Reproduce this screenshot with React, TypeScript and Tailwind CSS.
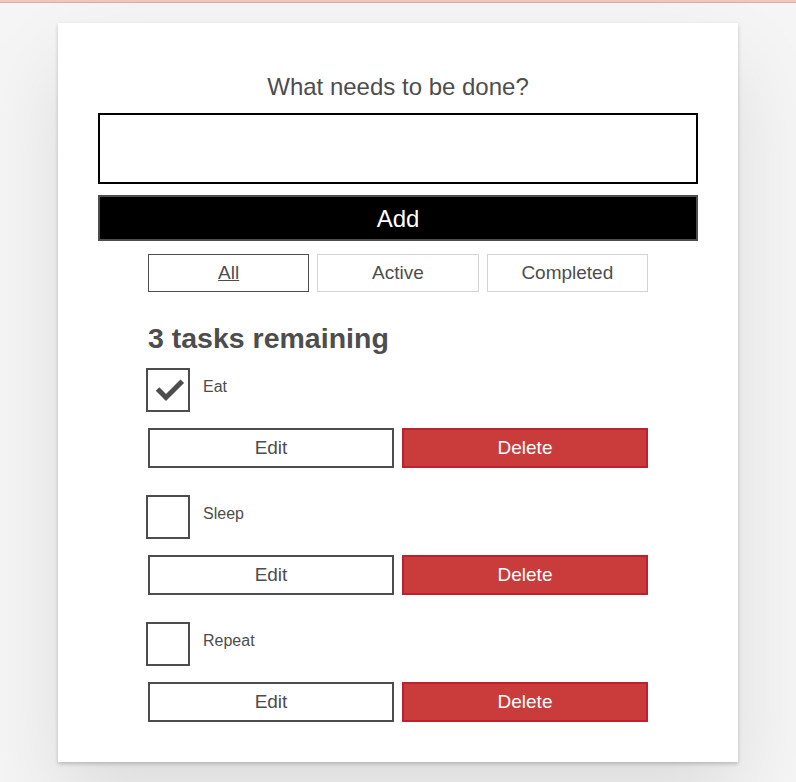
import React, { useState } from 'react';

type Task = { id: string; name: string; completed: boolean };

const FILTERS = ['All', 'Active', 'Completed'];

function Checkmark() {
  return (
    <svg width="44" height="44" viewBox="0 0 44 44" className="absolute left-0 top-0">
      <polyline
        points="11.3,20.8 18,27.5 32.5,13"
        fill="none"
        stroke="#4d4d4d"
        strokeWidth="5"
        strokeLinecap="square"
        strokeLinejoin="miter"
      />
    </svg>
  );
}

function TodoItem({ task, onToggle }: { task: Task; onToggle: () => void }) {
  return (
    <li className="mt-[27px] first:mt-0">
      <div className="flex items-start">
        <button
          type="button"
          onClick={onToggle}
          className="relative -ml-[2px] h-[44px] w-[44px] shrink-0 border-2 border-[#4d4d4d] bg-transparent"
          aria-pressed={task.completed}
        >
          {task.completed && <Checkmark />}
        </button>
        <span className="ml-[13px] mt-[9px] text-[16px] leading-[20px]">{task.name}</span>
      </div>
      <div className="mt-[16px] flex gap-2">
        <button className="flex h-[40px] flex-1 items-center justify-center border-2 border-[#4d4d4d] bg-white pt-px text-[19px]">
          Edit
        </button>
        <button className="flex h-[40px] flex-1 items-center justify-center border-2 border-[#bd2130] bg-[#ca3c3c] pt-px text-[19px] text-white">
          Delete
        </button>
      </div>
    </li>
  );
}

export default function App() {
  const [tasks, setTasks] = useState<Task[]>([
    { id: 'todo-0', name: 'Eat', completed: true },
    { id: 'todo-1', name: 'Sleep', completed: false },
    { id: 'todo-2', name: 'Repeat', completed: false },
  ]);
  const [filter, setFilter] = useState('All');

  const toggle = (id: string) =>
    setTasks(tasks.map((t) => (t.id === id ? { ...t, completed: !t.completed } : t)));

  return (
    <div className="min-h-screen bg-[#f5f5f5] font-['Liberation_Sans',Arial,sans-serif] text-[#4d4d4d]">
      {/* bande du haut */}
      <div className="h-[2px] bg-[#f3c5bd]" />
      <div className="h-[1px] bg-[#d9ada6]" />

      <div className="mx-auto mt-[20px] w-[680px] bg-white p-[40px] shadow-[0_2px_4px_0_rgba(0,0,0,0.2),0_40px_80px_0_rgba(0,0,0,0.1)]">
        <form onSubmit={(e) => e.preventDefault()}>
          <h2 className="pt-[10px] text-center text-[24px] font-normal leading-[28px]">What needs to be done?</h2>
          <input type="text" className="mt-[12px] block h-[71px] w-full border-2 border-black px-5 text-[24px] outline-none" />
          <button
            type="submit"
            className="mt-[11px] flex h-[46px] w-full items-center justify-center border-2 border-[#4d4d4d] bg-black pt-px text-[24px] text-white"
          >
            Add
          </button>
        </form>

        <div className="mx-auto w-[500px]">
          <div className="mt-[13px] flex gap-2">
            {FILTERS.map((f) => (
              <button
                key={f}
                onClick={() => setFilter(f)}
                className={
                  filter === f
                    ? 'flex h-[38px] flex-1 items-center justify-center border border-[#4d4d4d] bg-white pt-px text-[19px] underline'
                    : 'flex h-[38px] flex-1 items-center justify-center border border-[#d3d3d3] bg-white pt-px text-[19px]'
                }
              >
                {f}
              </button>
            ))}
          </div>

          <h2 className="mt-[27px] text-[28.5px] font-bold leading-[38px]">
            {tasks.length} tasks remaining
          </h2>

          <ul className="mt-[11px]">
            {tasks.map((t) => (
              <TodoItem key={t.id} task={t} onToggle={() => toggle(t.id)} />
            ))}
          </ul>
        </div>
      </div>
    </div>
  );
}
